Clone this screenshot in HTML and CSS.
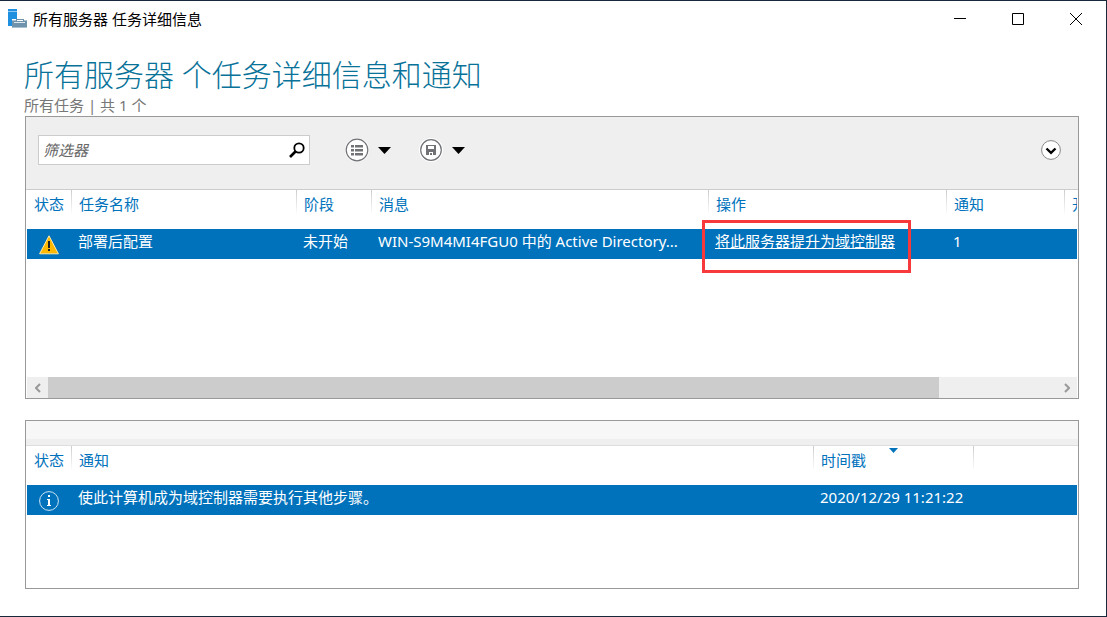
FILE: index.html
```html
<!DOCTYPE html>
<html lang="zh-CN">
<head>
<meta charset="utf-8">
<title>所有服务器 任务详细信息</title>
<link rel="stylesheet" href="styles.css">
</head>
<body>
<div class="window">
  <header class="titlebar">
    <svg class="app-icon" width="20" height="20" viewBox="0 0 20 20" aria-hidden="true">
      <path fill="#1f8fe0" d="M0 0h9v2H0zM0 3h9v7H4v7H0z"/>
      <path fill="#8fc8f0" d="M0 2h9v1H0z"/>
      <path fill="#6f93ab" d="M8 10h8v2h-1v-1H9v1H8zM4 12h15v7H4z"/>
      <path fill="#a9c1cf" d="M4 11h4v1H4zM16 11h3v1h-3zM4 18h15v1H4z"/>
      <path fill="#dce8ef" d="M6 13h11v1H6z"/>
    </svg>
    <span class="window-title">所有服务器 任务详细信息</span>
    <div class="window-controls">
      <button type="button" aria-label="最小化"><svg width="12" height="12" viewBox="0 0 12 12"><path d="M0 5.500h12"/></svg></button>
      <button type="button" aria-label="最大化"><svg width="12" height="12" viewBox="0 0 12 12"><path d="M.5.5h11v11H.5z"/></svg></button>
      <button type="button" aria-label="关闭"><svg width="12" height="12" viewBox="0 0 12 12"><path d="M0 0l12 12M12 0L0 12"/></svg></button>
    </div>
  </header>

  <main class="content">
    <h1>所有服务器 个任务详细信息和通知</h1>
    <p class="summary">所有任务 | 共 1 个</p>

    <section class="panel tasks">
      <div class="toolbar">
        <label class="filter">
          <input type="text" placeholder="筛选器" aria-label="筛选器">
          <svg width="16" height="16" viewBox="0 0 16 16" fill="none" stroke="#000" aria-hidden="true">
            <circle cx="10" cy="6" r="4.700" stroke-width="1.800"/>
            <path d="M6.500 9.500L1 15" stroke-width="2.600"/>
          </svg>
        </label>
        <button type="button" class="tool" aria-label="查看方式">
          <svg width="24" height="24" viewBox="0 0 24 24">
            <circle cx="12" cy="12" r="12" fill="#fff"/>
            <circle cx="12" cy="12" r="10.800" fill="#fff" stroke="#707276" stroke-width="1.200"/>
            <path fill="#707276" d="M6 7h3v2.500H6zM10 7h8v2.500h-8zM6 11h3v2.500H6zM10 11h8v2.500h-8zM6 15h3v2.500H6zM10 15h8v2.500h-8z"/>
          </svg>
          <svg width="13" height="7" viewBox="0 0 13 7"><path d="M0 0h13L6.500 7z"/></svg>
        </button>
        <button type="button" class="tool" aria-label="保存查询">
          <svg width="24" height="24" viewBox="0 0 24 24">
            <circle cx="12" cy="12" r="12" fill="#fff"/>
            <circle cx="12" cy="12" r="10.300" fill="#fff" stroke="#707276" stroke-width="1.200"/>
            <path fill="#707276" fill-rule="evenodd" d="M7 7h10v10H7zM9 8v3h6V8zM10 14v3h1v-2h2v2h1v-3z"/>
          </svg>
          <svg width="13" height="7" viewBox="0 0 13 7"><path d="M0 0h13L6.500 7z"/></svg>
        </button>
        <button type="button" class="expand" aria-label="展开">
          <svg width="20" height="20" viewBox="0 0 20 20">
            <circle cx="10" cy="10" r="9.400" fill="#fff" stroke="#888"/>
            <path d="M5.500 8.500L10 12.800l4.500-4.300" fill="none" stroke="#000" stroke-width="2.400"/>
          </svg>
        </button>
      </div>
      <table>
        <colgroup><col class="w-status"><col class="w-name"><col class="w-stage"><col><col class="w-action"><col class="w-notice"><col class="w-start"></colgroup>
        <thead>
          <tr><th>状态</th><th>任务名称</th><th>阶段</th><th>消息</th><th>操作</th><th>通知</th><th class="cut">开</th></tr>
        </thead>
        <tbody>
          <tr>
            <td class="icon-cell"><svg width="20" height="20" viewBox="0 0 20 20" role="img" aria-label="警告"><path d="M10 .8L19.400 18.800H.6z" fill="#ffb900" stroke="#ffe9a8" stroke-width="1" stroke-linejoin="round"/><path d="M9 6h2v7H9zM9 14h2v2H9z" fill="#222"/></svg></td>
            <td>部署后配置</td>
            <td>未开始</td>
            <td>WIN-S9M4MI4FGU0 中的 Active Directory...</td>
            <td class="marked"><a href="#">将此服务器提升为域控制器</a></td>
            <td>1</td>
            <td></td>
          </tr>
        </tbody>
      </table>
      <div class="scrollbar">
        <button type="button" aria-label="向左滚动"><svg width="6" height="10" viewBox="0 0 6 10"><path d="M5 1L1 5l4 4"/></svg></button>
        <div class="track"><div class="thumb"></div></div>
        <button type="button" aria-label="向右滚动"><svg width="6" height="10" viewBox="0 0 6 10"><path d="M1 1l4 4-4 4"/></svg></button>
      </div>
    </section>

    <section class="panel notices">
      <div class="band"></div>
      <table>
        <colgroup><col class="w-status"><col><col class="w-time"><col class="w-rest"></colgroup>
        <thead>
          <tr><th>状态</th><th>通知</th><th class="sorted">时间戳<svg width="9" height="5" viewBox="0 0 9 5" aria-hidden="true"><path d="M0 0h9L4.500 5z"/></svg></th><th></th></tr>
        </thead>
        <tbody>
          <tr>
            <td class="icon-cell"><svg width="20" height="20" viewBox="0 0 20 20" role="img" aria-label="信息"><circle cx="10" cy="10" r="9.400" fill="none" stroke="#cfe4f4"/><path d="M9 4h2v2H9zM8 8h3v6h1v1H8v-1h1V9H8z" fill="#fff"/></svg></td>
            <td>使此计算机成为域控制器需要执行其他步骤。</td>
            <td>2020/12/29 11:21:22</td>
            <td></td>
          </tr>
        </tbody>
      </table>
    </section>
  </main>
</div>
</body>
</html>
```
FILE: styles.css
```css
*, *::before, *::after { box-sizing: border-box; }

body {
  margin: 0;
  background: #fff;
  color: #000;
  font: 15px/20px "Noto Sans", "Noto Sans CJK SC", sans-serif;
}

button {
  display: flex;
  align-items: center;
  justify-content: center;
  padding: 0;
  border: 0;
  background: none;
  font: inherit;
}

svg { display: block; flex: none; }

.window {
  display: flex;
  flex-direction: column;
  min-height: 100vh;
  border: 1px solid #17283a;
  border-left: 0;
}

/* Title bar */
.titlebar {
  display: flex;
  align-items: center;
  height: 36px;
  padding: 0 1px 0 8px;
}

.window-title { margin-left: 5px; }

.window-controls {
  display: flex;
  align-self: stretch;
  margin-left: auto;
}

.window-controls button { width: 58px; }

.window-controls path {
  fill: none;
  stroke: #000;
}

/* Page body */
.content {
  display: flex;
  flex: 1;
  flex-direction: column;
  padding: 18px 27px 27px 25px;
}

h1 {
  margin: 0 0 0 -1px;
  color: #087299;
  font-family: "Open Sans", "Noto Sans CJK SC", sans-serif;
  font-size: 30px;
  font-weight: 300;
  line-height: 40px;
}

.summary {
  margin: 0 0 1px -1px;
  color: #777;
}

.panel {
  display: flex;
  flex-direction: column;
  border: 1px solid #999;
}

.tasks {
  flex: 1;
  margin-bottom: 21px;
}

.notices { min-height: 169px; }

/* Toolbar */
.toolbar {
  display: flex;
  align-items: center;
  padding: 18px 17px 24px 12px;
  border-bottom: 1px solid #ccc;
  background: #efefef;
}

.filter {
  display: flex;
  align-items: center;
  width: 272px;
  height: 30px;
  margin-right: 35px;
  padding: 0 4px;
  border: 1px solid #ccc;
  background: #fff;
}

.filter input {
  flex: 1;
  min-width: 0;
  padding: 0;
  border: 0;
  outline: 0;
  font: inherit;
  font-style: italic;
}

.filter input::placeholder { color: #666; opacity: 1; }

.tool {
  gap: 9px;
  margin-right: 28px;
}

.expand { margin-left: auto; }

/* Tables */
table {
  width: calc(100% - 2px);
  margin: 0 1px;
  border-collapse: collapse;
  table-layout: fixed;
}

.w-status { width: 44px; }
.w-name { width: 225px; }
.w-stage { width: 75px; }
.w-action { width: 238px; }
.w-notice { width: 118px; }
.w-start { width: 13px; }
.w-time { width: 160px; }
.w-rest { width: 104px; }

th {
  height: 39px;
  padding: 4px 0 0 8px;
  background: linear-gradient(#ccc, #fff) no-repeat 0 0 / 1px 25px;
  color: #0072bc;
  font-weight: 400;
  text-align: left;
  vertical-align: top;
  white-space: nowrap;
}

th:first-child {
  padding-left: 7px;
  background: none;
}

.cut { overflow: hidden; }

td {
  height: 30px;
  padding: 2px 0 8px 7px;
  background: #0072bc;
  color: #fff;
  white-space: nowrap;
}

td.icon-cell { padding: 1px 0 0 12px; }

td a { color: #fff; }

.marked { position: relative; }

.marked::after {
  position: absolute;
  top: -9px;
  left: -6px;
  width: 209px;
  height: 53px;
  border: 3px solid #f8393b;
  content: "";
  pointer-events: none;
}

.sorted { position: relative; }

.sorted svg {
  position: absolute;
  top: 2px;
  left: calc(50% - 4px);
  fill: #0072bc;
}

/* Scroll bar */
.scrollbar {
  display: flex;
  height: 21px;
  margin: auto 1px 0;
  background: #efefef;
}

.scrollbar button { width: 21px; }

.scrollbar path {
  fill: none;
  stroke: #999;
  stroke-width: 2;
}

.track { flex: 1; }

.thumb {
  width: 88.4%;
  height: 100%;
  background: #ccc;
}

.band {
  height: 25px;
  border-bottom: 1px solid #ddd;
  background: linear-gradient(#f7f7f7 18px, #efefef 18px);
}
```
